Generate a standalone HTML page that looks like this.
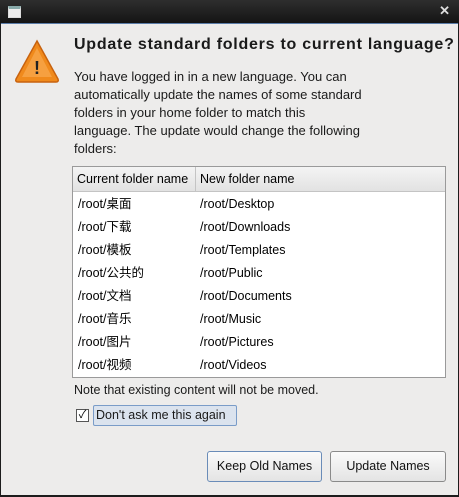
<!DOCTYPE html><html><head><style>
body{margin:0;width:459px;height:497px;background:#1c1c1c;font-family:"Liberation Sans","Noto Sans CJK SC",sans-serif;overflow:hidden;position:relative}
.t{position:absolute;left:0;top:0;width:459px;height:23px;background:linear-gradient(#2e2e2e,#141414)}
.win{position:absolute;left:1px;top:23px;width:457px;height:471px;background:#edeceb;border-top:1px solid #5a7ca8}
.a{position:absolute;white-space:nowrap;color:#1a1a1a}
.tb{position:absolute;left:72px;top:166px;width:372px;height:210px;background:#fff;border:1px solid #9a9a9a}
.hd{height:24px;background:linear-gradient(#f4f4f4,#e2e2e2);border-bottom:1px solid #c4c4c4;font-size:12.5px;position:relative}
.row{position:absolute;font-size:12.5px}
.btn{position:absolute;top:451px;height:29px;border:1px solid #8a8a8a;border-radius:3px;background:linear-gradient(#fafafa,#e4e4e4);font-size:12.5px;text-align:center;line-height:29px;color:#111}
</style></head><body>
<div class="t"><div style="position:absolute;left:8px;top:6px;width:11px;height:8px;border:1px solid #ddd;border-top:3px solid #8aa;background:#eee"></div><div style="position:absolute;right:9px;top:3px;color:#ddd;font-size:13px;font-weight:bold">✕</div></div>
<div class="win"></div>
<svg style="position:absolute;left:14px;top:38px" width="46" height="46" viewBox="0 0 46 46"><path d="M23 3 L44 41 Q45 44 42 44 L4 44 Q1 44 2 41 Z" fill="#f08a1c" stroke="#c8620e" stroke-width="1.5"/><path d="M23 10 L38 39 L8 39 Z" fill="#f6a040"/><text x="23" y="36" font-size="18" font-weight="bold" text-anchor="middle" fill="#222" font-family="Liberation Sans">!</text></svg>
<div class="a" style="left:74px;top:36px;font-size:16px;font-weight:bold;letter-spacing:0.75px">Update standard folders to current language?</div>
<div class="a" style="left:74px;top:68px;font-size:13px;line-height:18px">You have logged in in a new language. You can<br>automatically update the names of some standard<br>folders in your home folder to match this<br>language. The update would change the following<br>folders:</div>
<div class="tb"><div class="hd"><span style="position:absolute;left:4px;top:5px">Current folder name</span><span style="position:absolute;left:122px;top:0;height:24px;border-left:1px solid #c4c4c4"></span><span style="position:absolute;left:127px;top:5px">New folder name</span></div>
<div class="row" style="left:5px;top:26px;line-height:23px">/root/桌面<br>/root/下载<br>/root/模板<br>/root/公共的<br>/root/文档<br>/root/音乐<br>/root/图片<br>/root/视频</div>
<div class="row" style="left:127px;top:26px;line-height:23px">/root/Desktop<br>/root/Downloads<br>/root/Templates<br>/root/Public<br>/root/Documents<br>/root/Music<br>/root/Pictures<br>/root/Videos</div></div>
<div class="a" style="left:74px;top:383px;font-size:12.5px">Note that existing content will not be moved.</div>
<div style="position:absolute;left:76px;top:409px;width:11px;height:11px;border:1px solid #555;background:#fff;font-size:11px;line-height:11px;text-align:center">✓</div>
<div class="a" style="left:93px;top:405px;width:140px;height:19px;border:1px solid #7a9cc8;border-radius:2px;background:#dbe3ee;font-size:12.5px;line-height:19px;padding-left:2px">Don't ask me this again</div>
<div class="btn" style="left:207px;width:113px;border-color:#6a8cb8">Keep Old Names</div>
<div class="btn" style="left:330px;width:114px">Update Names</div>
</body></html>
